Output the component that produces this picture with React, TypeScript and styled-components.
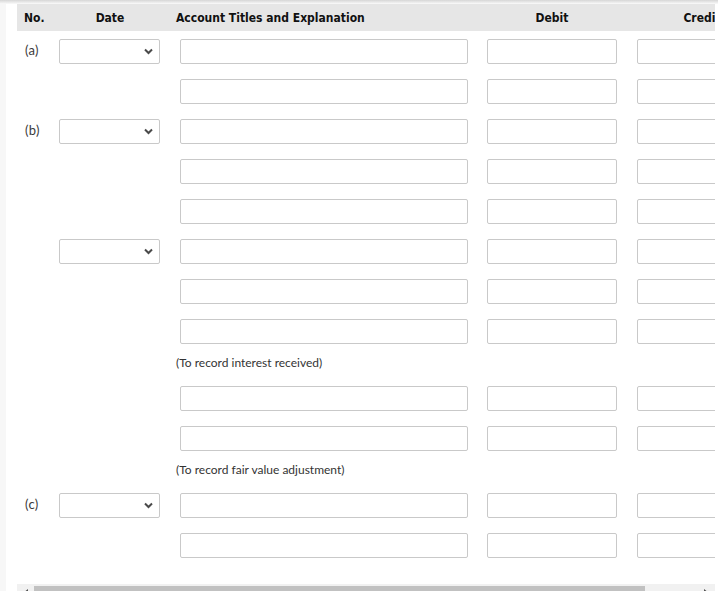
import React from "react";
import styled, { createGlobalStyle } from "styled-components";

const GlobalStyle = createGlobalStyle`
  html, body {
    margin: 0;
    padding: 0;
    overflow: hidden;
    background: #fff;
  }
  body {
    font-family: Lato, "Open Sans", sans-serif;
    color: #333;
  }
`;

const COLUMNS = "33px 120px 307px 150px 150px";

type Line = { kind: "entry"; no?: string; date?: boolean } | { kind: "note"; text: string };

const lines: Line[] = [
  { kind: "entry", no: "(a)", date: true },
  { kind: "entry" },
  { kind: "entry", no: "(b)", date: true },
  { kind: "entry" },
  { kind: "entry" },
  { kind: "entry", date: true },
  { kind: "entry" },
  { kind: "entry" },
  { kind: "note", text: "(To record interest received)" },
  { kind: "entry" },
  { kind: "entry" },
  { kind: "note", text: "(To record fair value adjustment)" },
  { kind: "entry", no: "(c)", date: true },
  { kind: "entry" },
];

const Page = styled.div`
  display: flex;
  flex-direction: column;
  height: 100vh;
`;

const TopShadow = styled.div`
  height: 4px;
  flex-shrink: 0;
  background: linear-gradient(rgba(0, 0, 0, 0.16), rgba(0, 0, 0, 0.02));
`;

const Body = styled.div`
  display: flex;
  flex: 1;
`;

const LeftStrip = styled.div`
  width: 6px;
  flex-shrink: 0;
  background: #f7f7f7;
`;

const Main = styled.div`
  padding: 0 3px 0 11px;
  display: flex;
  flex-direction: column;
`;

const Sheet = styled.div`
  width: 698px;
  overflow: hidden;
`;

const Grid = styled.div`
  width: 760px;
`;

const HeaderRow = styled.div`
  display: grid;
  grid-template-columns: ${COLUMNS};
  height: 27px;
  align-items: center;
  background: #e6e6e6;
  font-family: "DejaVu Sans Condensed", "DejaVu Sans", sans-serif;
  font-weight: bold;
  font-size: 12px;
  color: #111;
`;

const HeadCell = styled.div<{ $center?: boolean; $pad?: number }>`
  text-align: ${(p) => (p.$center ? "center" : "left")};
  padding-left: ${(p) => p.$pad ?? 0}px;
  white-space: nowrap;
`;

const Row = styled.div`
  display: grid;
  grid-template-columns: ${COLUMNS};
  height: 40px;
  padding-top: 8px;
  box-sizing: border-box;
  align-items: start;
`;

const Cell = styled.div<{ $pad: number }>`
  padding-left: ${(p) => p.$pad}px;
`;

const NoLabel = styled.div`
  font-size: 13px;
  line-height: 23px;
  letter-spacing: 0.3px;
  color: #3a3a3a;
`;

const SelectWrap = styled.div`
  position: relative;
  width: 101px;
  height: 25px;
`;

const DateSelect = styled.select`
  appearance: none;
  width: 100%;
  height: 100%;
  box-sizing: border-box;
  border: 1px solid #c9c9c9;
  border-radius: 2px;
  background: #fff;
  margin: 0;
`;

const Chevron = styled.svg`
  position: absolute;
  right: 7px;
  top: 9px;
  pointer-events: none;
`;

const Field = styled.input<{ $w: number }>`
  display: block;
  width: ${(p) => p.$w}px;
  height: 25px;
  box-sizing: border-box;
  border: 1px solid #c9c9c9;
  border-radius: 2px;
  background: #fff;
  margin: 0;
  padding: 0 4px;
`;

const NoteRow = styled.div`
  display: grid;
  grid-template-columns: ${COLUMNS};
  height: 27px;
  padding-top: 4px;
  box-sizing: border-box;
`;

const NoteText = styled.div`
  grid-column: 3;
  padding-left: 6px;
  font-size: 12px;
  line-height: 15px;
  color: #333;
  white-space: nowrap;
`;

const Scrollbar = styled.div`
  margin-top: 19px;
  width: 698px;
  height: 17px;
  display: flex;
  background: #f1f1f1;
`;

const ArrowButton = styled.div`
  width: 17px;
  height: 17px;
  display: flex;
  align-items: center;
  justify-content: center;
  flex-shrink: 0;
`;

const Track = styled.div`
  flex: 1;
  display: flex;
  padding: 2px 0;
  box-sizing: border-box;
`;

const Thumb = styled.div`
  width: 611px;
  background: #c1c1c1;
`;

const Arrow = ({ dir }: { dir: "left" | "right" }) => (
  <svg width="7" height="8" viewBox="0 0 7 8">
    <polygon points={dir === "left" ? "6,0 6,8 1,4" : "1,0 1,8 6,4"} fill="#505050" />
  </svg>
);

export default function App() {
  return (
    <>
      <GlobalStyle />
      <Page>
        <TopShadow />
        <Body>
          <LeftStrip />
          <Main>
            <Sheet>
              <Grid>
                <HeaderRow>
                  <HeadCell $pad={7}>No.</HeadCell>
                  <HeadCell $center>Date</HeadCell>
                  <HeadCell $pad={6}>Account Titles and Explanation</HeadCell>
                  <HeadCell $center>Debit</HeadCell>
                  <HeadCell $center>Credit</HeadCell>
                </HeaderRow>
                {lines.map((line, i) =>
                  line.kind === "note" ? (
                    <NoteRow key={i}>
                      <NoteText>{line.text}</NoteText>
                    </NoteRow>
                  ) : (
                    <Row key={i}>
                      <Cell $pad={8}>{line.no && <NoLabel>{line.no}</NoLabel>}</Cell>
                      <Cell $pad={9}>
                        {line.date && (
                          <SelectWrap>
                            <DateSelect defaultValue="">
                              <option value=""></option>
                            </DateSelect>
                            <Chevron width="9" height="7" viewBox="0 0 9 7">
                              <polyline
                                points="1,1.5 4.5,5 8,1.5"
                                fill="none"
                                stroke="#4a4a4a"
                                strokeWidth="2"
                              />
                            </Chevron>
                          </SelectWrap>
                        )}
                      </Cell>
                      <Cell $pad={10}>
                        <Field $w={288} />
                      </Cell>
                      <Cell $pad={10}>
                        <Field $w={130} />
                      </Cell>
                      <Cell $pad={10}>
                        <Field $w={130} />
                      </Cell>
                    </Row>
                  )
                )}
              </Grid>
            </Sheet>
            <Scrollbar>
              <ArrowButton>
                <Arrow dir="left" />
              </ArrowButton>
              <Track>
                <Thumb />
              </Track>
              <ArrowButton>
                <Arrow dir="right" />
              </ArrowButton>
            </Scrollbar>
          </Main>
        </Body>
      </Page>
    </>
  );
}
